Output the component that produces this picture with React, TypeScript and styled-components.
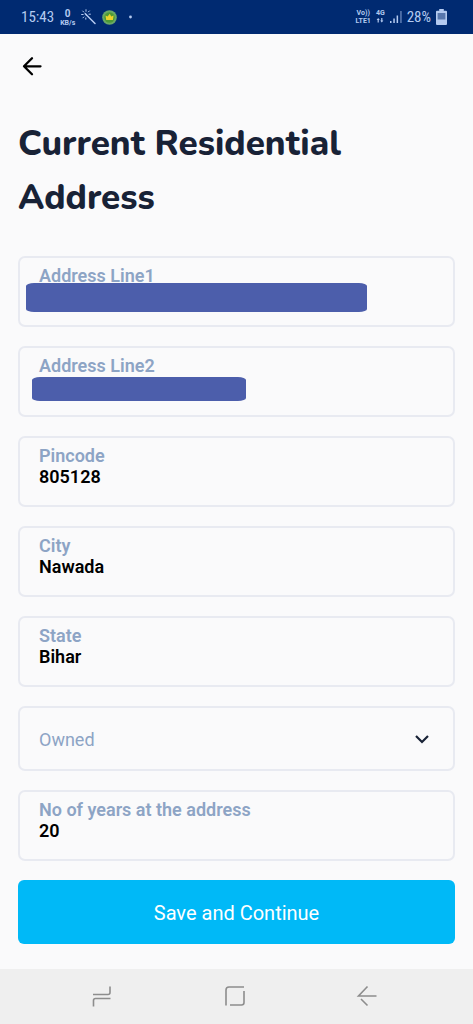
import React from "react";
import styled, { createGlobalStyle } from "styled-components";

const GlobalStyle = createGlobalStyle`
  *, *::before, *::after { box-sizing: border-box; }
  body {
    margin: 0;
    background: #fafafb;
    font-family: Roboto, "Liberation Sans", sans-serif;
  }
  button, input, select { font-family: inherit; }
`;

const Screen = styled.div`
  display: flex;
  flex-direction: column;
  min-height: 100vh;
`;

const StatusBar = styled.div`
  display: flex;
  align-items: center;
  justify-content: space-between;
  height: 34px;
  padding: 0 26px 0 21px;
  background: #002a71;
  color: #b4caf0;
`;

const StatusGroup = styled.div<{ $gap: number }>`
  display: flex;
  align-items: center;
  gap: ${(p) => p.$gap}px;
`;

const StatusText = styled.span`
  font-family: "Roboto Condensed", Roboto, sans-serif;
  font-size: 15px;
  line-height: 20px;
`;

const Stack = styled.span`
  display: flex;
  flex-direction: column;
  align-items: center;
  font-weight: 700;
  font-size: 7px;
  line-height: 8px;
`;

const StackTop = styled.span<{ $large?: boolean }>`
  font-size: ${(p) => (p.$large ? 10 : 7)}px;
  line-height: ${(p) => (p.$large ? 11 : 7)}px;
`;

const Main = styled.main`
  flex: 1;
  padding: 18px 18px 24px;
`;

const BackButton = styled.button`
  display: block;
  padding: 0 0 0 2px;
  border: 0;
  background: none;
  color: #000;
  line-height: 0;
`;

const Title = styled.h1`
  margin: 37px 0 31px;
  font-family: Nunito, Lato, sans-serif;
  font-size: 35px;
  font-weight: 800;
  line-height: 54px;
  color: #182236;
`;

const Form = styled.form`
  display: flex;
  flex-direction: column;
  gap: 19px;
`;

const FieldBox = styled.div`
  position: relative;
  padding: 7px 19px 18px;
  border: 2px solid #e8eaf1;
  border-radius: 7px;
`;

const Label = styled.label`
  display: block;
  font-size: 18px;
  font-weight: 600;
  line-height: 21px;
  color: #8da4c5;
`;

const Input = styled.input`
  display: block;
  width: 100%;
  height: 21px;
  padding: 0;
  border: 0;
  outline: 0;
  background: transparent;
  font-size: 18px;
  font-weight: 600;
  line-height: 21px;
  color: #000;
`;

const Redaction = styled.span<{ $top: number; $left: number; $width: number; $height: number }>`
  position: absolute;
  top: ${(p) => p.$top}px;
  left: ${(p) => p.$left}px;
  width: ${(p) => p.$width}px;
  height: ${(p) => p.$height}px;
  border-radius: 8px / 3px;
  background: #4c5eab;
`;

const SelectBox = styled.div`
  display: grid;
  align-items: center;
  height: 65px;
  border: 2px solid #e8eaf1;
  border-radius: 7px;
  color: #182236;

  > * { grid-area: 1 / 1; }
  > svg { justify-self: end; margin-right: 23px; pointer-events: none; }
`;

const Select = styled.select`
  appearance: none;
  width: 100%;
  height: 100%;
  padding: 2px 48px 0 19px;
  border: 0;
  outline: 0;
  background: transparent;
  font-size: 18px;
  color: #8da4c5;
`;

const SaveButton = styled.button`
  height: 64px;
  padding: 2px 6px 0;
  border: 0;
  border-radius: 6px;
  background: #00b9f7;
  font-size: 20px;
  color: #fff;
`;

const NavBar = styled.nav`
  display: flex;
  justify-content: space-between;
  height: 55px;
  padding: 0 91px 2px 87px;
  background: #efefef;
`;

const NavButton = styled.button`
  display: flex;
  align-items: center;
  padding: 0 4px;
  border: 0;
  background: none;
  color: #8d8d8d;
`;

type Cover = { top: number; left: number; width: number; height: number };

const fields: { id: string; label: string; value: string; cover?: Cover }[] = [
  { id: "line1", label: "Address Line1", value: "", cover: { top: 25, left: 6, width: 341, height: 29 } },
  { id: "line2", label: "Address Line2", value: "", cover: { top: 29, left: 12, width: 214, height: 24 } },
  { id: "pincode", label: "Pincode", value: "805128" },
  { id: "city", label: "City", value: "Nawada" },
  { id: "state", label: "State", value: "Bihar" },
];

function Field({ id, label, value, cover }: { id: string; label: string; value: string; cover?: Cover }) {
  return (
    <FieldBox>
      <Label htmlFor={id}>{label}</Label>
      <Input id={id} defaultValue={value} />
      {cover && <Redaction $top={cover.top} $left={cover.left} $width={cover.width} $height={cover.height} />}
    </FieldBox>
  );
}

export default function App() {
  return (
    <Screen>
      <GlobalStyle />
      <StatusBar>
        <StatusGroup $gap={6}>
          <StatusText>15:43</StatusText>
          <Stack>
            <StackTop $large>0</StackTop>
            <span>KB/s</span>
          </Stack>
          <svg width="15" height="16" viewBox="0 0 15 16" fill="none" stroke="currentColor" strokeLinecap="round" aria-hidden="true">
            <path d="M5.5 6 14 14.500" strokeWidth="1.500" />
            <path d="M5 .7v1.600M1.700 2 2.800 3.100M.6 5.500h1.600M1.900 8.900 2.900 7.900M8.400 1.900 7.400 2.900M4.800 9v1.200M8 5.200h1.400" strokeWidth="1" />
            <path d="M4.300 4.700 5.300 5.800" strokeWidth="1.600" />
          </svg>
          <svg width="15" height="15" viewBox="0 0 15 15" aria-hidden="true">
            <circle cx="7.500" cy="7.500" r="7.300" fill="#69a866" />
            <circle cx="7.500" cy="7.500" r="5.200" fill="#4d9a35" />
            <path d="M3.500 5.500 5.600 6.500 7.800 3.700 9.200 6.400 11.600 5.600 10.900 10H4.200Z" fill="#ead22c" />
          </svg>
          <svg width="14" height="4" viewBox="0 0 14 4" aria-hidden="true">
            <circle cx="7.500" cy="2" r="1.400" fill="currentColor" />
          </svg>
        </StatusGroup>
        <StatusGroup $gap={5}>
          <Stack>
            <StackTop>Vo))</StackTop>
            <span>LTE1</span>
          </Stack>
          <Stack>
            <StackTop>4G</StackTop>
            <svg width="8" height="7" viewBox="0 0 8 7" fill="currentColor" aria-hidden="true">
              <path d="M2.200 1 3.800 3H2.800V5.500H1.600V3H.6ZM5.800 5.500 4.200 3.500H5.200V1H6.400V3.500H7.400Z" />
            </svg>
          </Stack>
          <svg width="12" height="12" viewBox="0 0 12 12" aria-hidden="true">
            <path d="M0 10h1.500v2H0ZM3.300 7.500h1.500V12H3.300ZM6.600 4.500h1.500V12H6.600Z" fill="currentColor" />
            <path d="M10.200 0h1.500v12h-1.500Z" fill="#5f7fb5" />
          </svg>
          <StatusText>28%</StatusText>
          <svg width="11" height="16" viewBox="0 0 11 16" aria-hidden="true">
            <path d="M3.200 0h4.600v1.800H10a1 1 0 0 1 1 1V15a1 1 0 0 1-1 1H1a1 1 0 0 1-1-1V2.800a1 1 0 0 1 1-1h2.200Z" fill="currentColor" />
            <path d="M1.600 4h7.800v6.500H1.600Z" fill="#5877ad" />
          </svg>
        </StatusGroup>
      </StatusBar>

      <Main>
        <BackButton type="button" aria-label="Back">
          <svg width="24" height="28" viewBox="0 0 24 28" fill="none" stroke="currentColor" strokeWidth="2.300" strokeLinecap="round" strokeLinejoin="round">
            <path d="M20.500 14.300H4M12 6.300 4 14.300 12 22.300" />
          </svg>
        </BackButton>
        <Title>Current Residential Address</Title>
        <Form onSubmit={(e) => e.preventDefault()}>
          {fields.map((f) => (
            <Field key={f.id} {...f} />
          ))}
          <SelectBox>
            <Select aria-label="Residence type" defaultValue="Owned">
              <option>Owned</option>
            </Select>
            <svg width="16" height="12" viewBox="0 0 16 12" fill="none" stroke="currentColor" strokeWidth="2.200" aria-hidden="true">
              <path d="M2 3 8 9 14 3" />
            </svg>
          </SelectBox>
          <Field id="years" label="No of years at the address" value="20" />
          <SaveButton type="submit">Save and Continue</SaveButton>
        </Form>
      </Main>

      <NavBar>
        <NavButton type="button" aria-label="Recent apps">
          <svg width="22" height="22" viewBox="0 0 22 22" fill="none" stroke="currentColor" strokeWidth="1.600">
            <path d="M2 9.500h15q2 0 2-2V1.500M19.500 13.500h-15q-2 0-2 2V21.500" />
          </svg>
        </NavButton>
        <NavButton type="button" aria-label="Home">
          <svg width="22" height="22" viewBox="0 0 22 22" fill="none" stroke="currentColor" strokeWidth="1.600">
            <path d="M2 20.500V5q0-3 3-3H20M20 6v11.500q0 2.500-2.500 2.500H6" />
          </svg>
        </NavButton>
        <NavButton type="button" aria-label="Back">
          <svg width="22" height="22" viewBox="0 0 22 22" fill="none" stroke="currentColor" strokeWidth="1.600">
            <path d="M20.500 11H2.500L11.500 1.500M5 14 11.500 20.500" />
          </svg>
        </NavButton>
      </NavBar>
    </Screen>
  );
}
